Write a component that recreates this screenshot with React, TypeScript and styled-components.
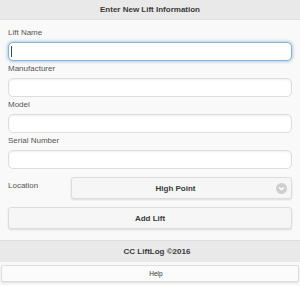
import styled, { createGlobalStyle } from 'styled-components'

const GlobalStyle = createGlobalStyle`
	html, body {
		margin: 0;
		padding: 0;
		background: #f9f9f9;
	}
	* {
		box-sizing: border-box;
	}
`

const fields = ['Lift Name', 'Manufacturer', 'Model', 'Serial Number']

export default function App() {
	return (
		<>
			<GlobalStyle />
			<Page>
				<Header>Enter New Lift Information</Header>
				<Content>
					{fields.map((name, i) => (
						<Field key={name}>
							<Label>{name}</Label>
							<InputWrap>
								<TextInput type="text" $focused={i === 0} />
								{i === 0 && <Caret />}
							</InputWrap>
						</Field>
					))}

					<LocationRow>
						<LocationLabel>Location</LocationLabel>
						<SelectButton>
							<SelectText>High Point</SelectText>
							<SelectIcon>
								<svg width="11" height="11" viewBox="0 0 11 11">
									<circle cx="5.5" cy="5.5" r="5.5" fill="#cfcfcf" />
									<path
										d="M3.5 4.8 L5.5 6.8 L7.5 4.8"
										stroke="#fff"
										strokeWidth="1.4"
										fill="none"
										strokeLinecap="round"
										strokeLinejoin="round"
									/>
								</svg>
							</SelectIcon>
						</SelectButton>
					</LocationRow>

					<Button type="button">Add Lift</Button>
				</Content>

				<Footer>
					<FooterTitle>CC LiftLog ©2016</FooterTitle>
				</Footer>
				<HelpBar>
					<HelpButton type="button">Help</HelpButton>
				</HelpBar>
			</Page>
		</>
	)
}

const Page = styled.div`
	width: 300px;
	height: 286px;
	background: #f9f9f9;
	font-family: 'Liberation Sans', Arial, sans-serif;
	color: #333;
	display: flex;
	flex-direction: column;
	overflow: hidden;
`

const Header = styled.header`
	height: 20px;
	background: #e9e9e9;
	border-bottom: 1px solid #dddddd;
	display: flex;
	align-items: center;
	justify-content: center;
	font-size: 8px;
	font-weight: 700;
	color: #3a3a3a;
`

const Content = styled.div`
	padding: 8px 8px 11px;
	display: flex;
	flex-direction: column;
`

const Field = styled.div`
	display: flex;
	flex-direction: column;
	margin-bottom: 3px;
`

const Label = styled.label`
	font-size: 8px;
	line-height: 10px;
	color: #555;
	margin-bottom: 4px;
`

const InputWrap = styled.div`
	position: relative;
`

const TextInput = styled.input<{ $focused?: boolean }>`
	display: block;
	width: 100%;
	height: 19px;
	margin: 0;
	padding: 0 4px;
	border-radius: 5px;
	border: 1px solid ${({ $focused }) => ($focused ? '#88b3d8' : '#dddddd')};
	background: #fff;
	outline: none;
	box-shadow: ${({ $focused }) =>
		$focused
			? '0 0 3px 1px rgba(90, 150, 205, 0.45)'
			: 'inset 0 1px 2px rgba(0, 0, 0, 0.07)'};
	font-family: 'Liberation Sans', Arial, sans-serif;
	font-size: 8px;
`

const Caret = styled.span`
	position: absolute;
	left: 3px;
	top: 4px;
	width: 1px;
	height: 11px;
	background: #444;
`

const LocationRow = styled.div`
	display: flex;
	align-items: flex-start;
	margin-top: 5px;
	margin-bottom: 8px;
`

const LocationLabel = styled.div`
	width: 63px;
	padding-top: 4px;
	font-size: 8px;
	line-height: 10px;
	color: #555;
`

const SelectButton = styled.div`
	flex: 1;
	height: 22px;
	position: relative;
	display: flex;
	align-items: center;
	padding: 0 20px 0 8px;
	background: #f6f6f6;
	border: 1px solid #dddddd;
	border-radius: 3px;
	box-shadow: 0 1px 2px rgba(0, 0, 0, 0.12);
`

const SelectText = styled.span`
	flex: 1;
	text-align: center;
	font-size: 8px;
	font-weight: 700;
	color: #3a3a3a;
`

const SelectIcon = styled.span`
	position: absolute;
	right: 4px;
	top: 5px;
	display: flex;
`

const Button = styled.button`
	width: 100%;
	height: 22px;
	margin: 0;
	padding: 0;
	background: #f6f6f6;
	border: 1px solid #dddddd;
	border-radius: 3px;
	box-shadow: 0 1px 2px rgba(0, 0, 0, 0.12);
	font-family: 'Liberation Sans', Arial, sans-serif;
	font-size: 8px;
	font-weight: 700;
	color: #3a3a3a;
`

const Footer = styled.footer`
	height: 22px;
	background: #e9e9e9;
	border-top: 1px solid #dddddd;
	display: flex;
	align-items: center;
	justify-content: center;
	padding-left: 14px;
`

const FooterTitle = styled.span`
	font-size: 8px;
	font-weight: 700;
	color: #3a3a3a;
`

const HelpBar = styled.div`
	padding: 3px 1px;
	background: #f9f9f9;
`

const HelpButton = styled.button`
	display: block;
	width: 100%;
	height: 17px;
	margin: 0;
	padding: 0 0 0 12px;
	background: #fbfbfb;
	border: 1px solid #dddddd;
	border-radius: 2px;
	box-shadow: 0 1px 2px rgba(0, 0, 0, 0.1);
	font-family: 'Liberation Sans', Arial, sans-serif;
	font-size: 6.5px;
	color: #333;
`
